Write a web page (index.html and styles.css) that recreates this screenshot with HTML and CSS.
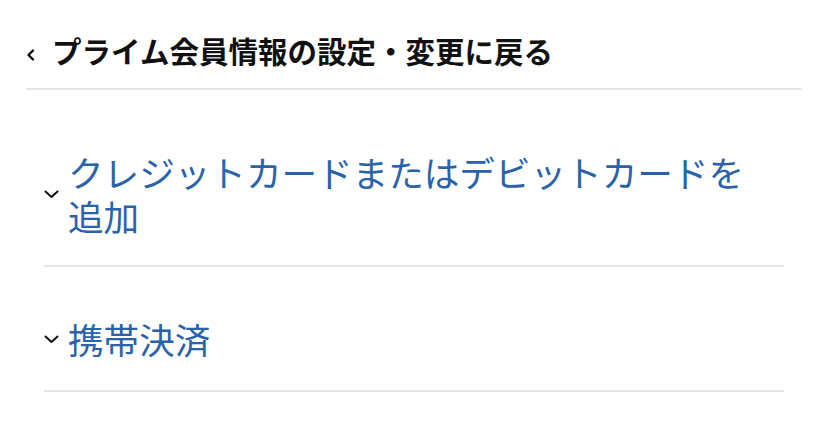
FILE: index.html
```html
<!DOCTYPE html>
<html lang="ja">
<head>
<meta charset="utf-8">
<link rel="stylesheet" href="styles.css">
</head>
<body>
<header class="back">
  <a class="back-link" href="#">
    <svg class="back-icon" width="9" height="12" viewBox="0 0 9 12"><polyline points="7,1.5 2.5,6 7,10.5" fill="none" stroke="#111" stroke-width="2.4" stroke-linecap="round" stroke-linejoin="round"/></svg>
    <span class="back-text">プライム会員情報の設定・変更に戻る</span>
  </a>
</header>
<ul class="options">
  <li class="option first">
    <svg class="chev" width="15" height="9" viewBox="0 0 15 9"><polyline points="1.5,1.5 7.5,7 13.5,1.5" fill="none" stroke="#111" stroke-width="2" stroke-linecap="round" stroke-linejoin="round"/></svg>
    <span class="option-text">クレジットカードまたはデビットカードを追加</span>
  </li>
  <li class="option">
    <svg class="chev" width="15" height="9" viewBox="0 0 15 9"><polyline points="1.5,1.5 7.5,7 13.5,1.5" fill="none" stroke="#111" stroke-width="2" stroke-linecap="round" stroke-linejoin="round"/></svg>
    <span class="option-text">携帯決済</span>
  </li>
</ul>
</body>
</html>
```
FILE: styles.css
```css
html, body {
  margin: 0;
  padding: 0;
  background: #ffffff;
}
body {
  font-family: "Noto Sans CJK JP", "Noto Sans", sans-serif;
}
.back {
  margin: 0 26px;
  padding: 30px 0 18px;
  border-bottom: 2px solid #e6e6e6;
}
.back-link {
  display: flex;
  align-items: center;
  text-decoration: none;
  color: #111111;
}
.back-icon {
  display: block;
  margin-left: 0;
  margin-right: 17px;
  margin-top: 10px;
}
.back-text {
  font-size: 29.5px;
  font-weight: 700;
  line-height: 40px;
}
.options {
  list-style: none;
  margin: 10px 44px 0;
  padding: 0;
}
.option {
  display: flex;
  align-items: center;
  padding: 50px 0 29px;
  border-bottom: 2px solid #e6e6e6;
}
.option.first {
  padding-bottom: 27px;
}
.chev {
  display: block;
  flex: none;
  margin-right: 9px;
}
.option-text {
  font-size: 35.6px;
  line-height: 44px;
  color: #2a63ab;
  max-width: 690px;
}
```
